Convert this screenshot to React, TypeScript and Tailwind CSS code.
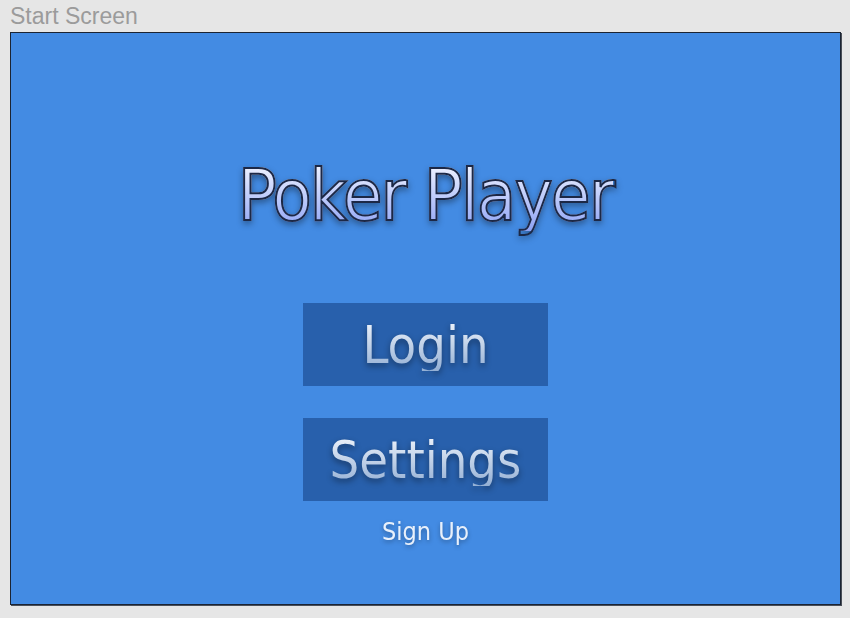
export default function App() {
  const face = { fontFamily: '"DejaVu Sans Condensed", "Liberation Sans", sans-serif' };

  return (
    <div className="w-[850px] h-[618px] bg-[#e6e6e6] overflow-hidden">
      {/* Label */}
      <div className="h-[32px] pl-[10px] pt-[3px] text-[23px] leading-[26px] text-[#9b9b9b]" style={{ fontFamily: '"Liberation Sans", sans-serif' }}>
        Start Screen
      </div>

      {/* Screen */}
      <div className="ml-[10px] w-[831px] h-[573px] bg-[#438be3] border border-[#1b2433] shadow-[1px_1px_0_#4a4f58] flex flex-col items-center" style={face}>
        <h1
          className="mt-[126px] text-[72px] leading-none tracking-[-2px] bg-gradient-to-b from-[#f8f9ff] to-[#8ea2f4] bg-clip-text text-transparent [-webkit-text-stroke:2px_#1c2846] drop-shadow-[0_3px_3px_rgba(0,0,0,0.35)]"
        >
          Poker Player
        </h1>

        {/* Menu */}
        <div className="mt-[72px] flex flex-col items-center">
          {["Login", "Settings"].map((label, i) => (
            <button
              key={label}
              className={`w-[245px] h-[83px] bg-[#2860ac] flex items-center justify-center ${i > 0 ? "mt-[32px]" : ""}`}
            >
              <span className="text-[52px] leading-none bg-gradient-to-b from-[#f2f6fc] to-[#93afd4] bg-clip-text text-transparent drop-shadow-[0_3px_3px_rgba(0,0,0,0.4)]">
                {label}
              </span>
            </button>
          ))}

          <span className="mt-[18px] text-[25px] leading-none text-[#e8f0fb] drop-shadow-[0_2px_2px_rgba(0,0,0,0.3)]">
            Sign Up
          </span>
        </div>
      </div>
    </div>
  );
}
